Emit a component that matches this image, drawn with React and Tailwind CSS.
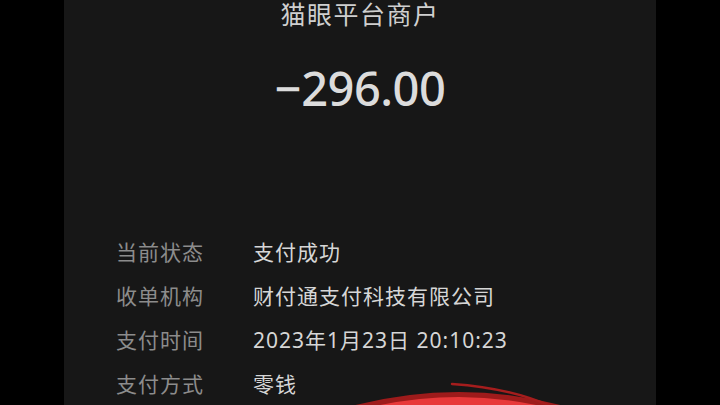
const rows = [
  { label: '当前状态', value: '支付成功' },
  { label: '收单机构', value: '财付通支付科技有限公司' },
  { label: '支付时间', value: '2023年1月23日 20:10:23' },
  { label: '支付方式', value: '零钱' },
];

const font = { fontFamily: '"Noto Sans", "Noto Sans CJK SC", sans-serif' };

export default function App() {
  return (
    <div className="relative w-[720px] h-[405px] bg-black flex justify-center overflow-hidden" style={font}>
      <div className="w-[592px] h-full bg-[#171717] flex flex-col">
        {/* Merchant */}
        <div className="mt-[2px] text-center text-[25px] leading-none tracking-[1.5px] text-[#cfcfcf]">
          猫眼平台商户
        </div>

        {/* Amount */}
        <div className="mt-[38px] text-center text-[47px] leading-none font-medium tracking-[-0.5px] text-[#dcdcdc]">
          −296.00
        </div>

        {/* Divider */}
        <div className="mt-[83px] mx-[51px] h-px bg-[#262626]" />

        {/* Detail rows */}
        <div className="mt-[36px] flex flex-col">
          {rows.map((row) => (
            <div key={row.label} className="flex h-[44px] items-center text-[21px] tracking-[1px]">
              <div className="w-[189px] pl-[52px] shrink-0 text-[#8c8c8c]">{row.label}</div>
              <div className="text-[#d6d6d6]">{row.value}</div>
            </div>
          ))}
        </div>
      </div>

      {/* hand-drawn red mark */}
      <svg className="absolute left-0 top-0 pointer-events-none" width="720" height="405" viewBox="0 0 720 405">
        <path d="M335 420 Q460 382 580 420" fill="none" stroke="#9e1b1b" strokeWidth="18" />
        <path d="M340 421 Q460 384 575 421" fill="none" stroke="#e8393a" strokeWidth="11" />
        <path d="M452 384 Q510 388 550 406" fill="none" stroke="#a51d1d" strokeWidth="2.5" strokeLinecap="round" />
      </svg>
    </div>
  );
}
